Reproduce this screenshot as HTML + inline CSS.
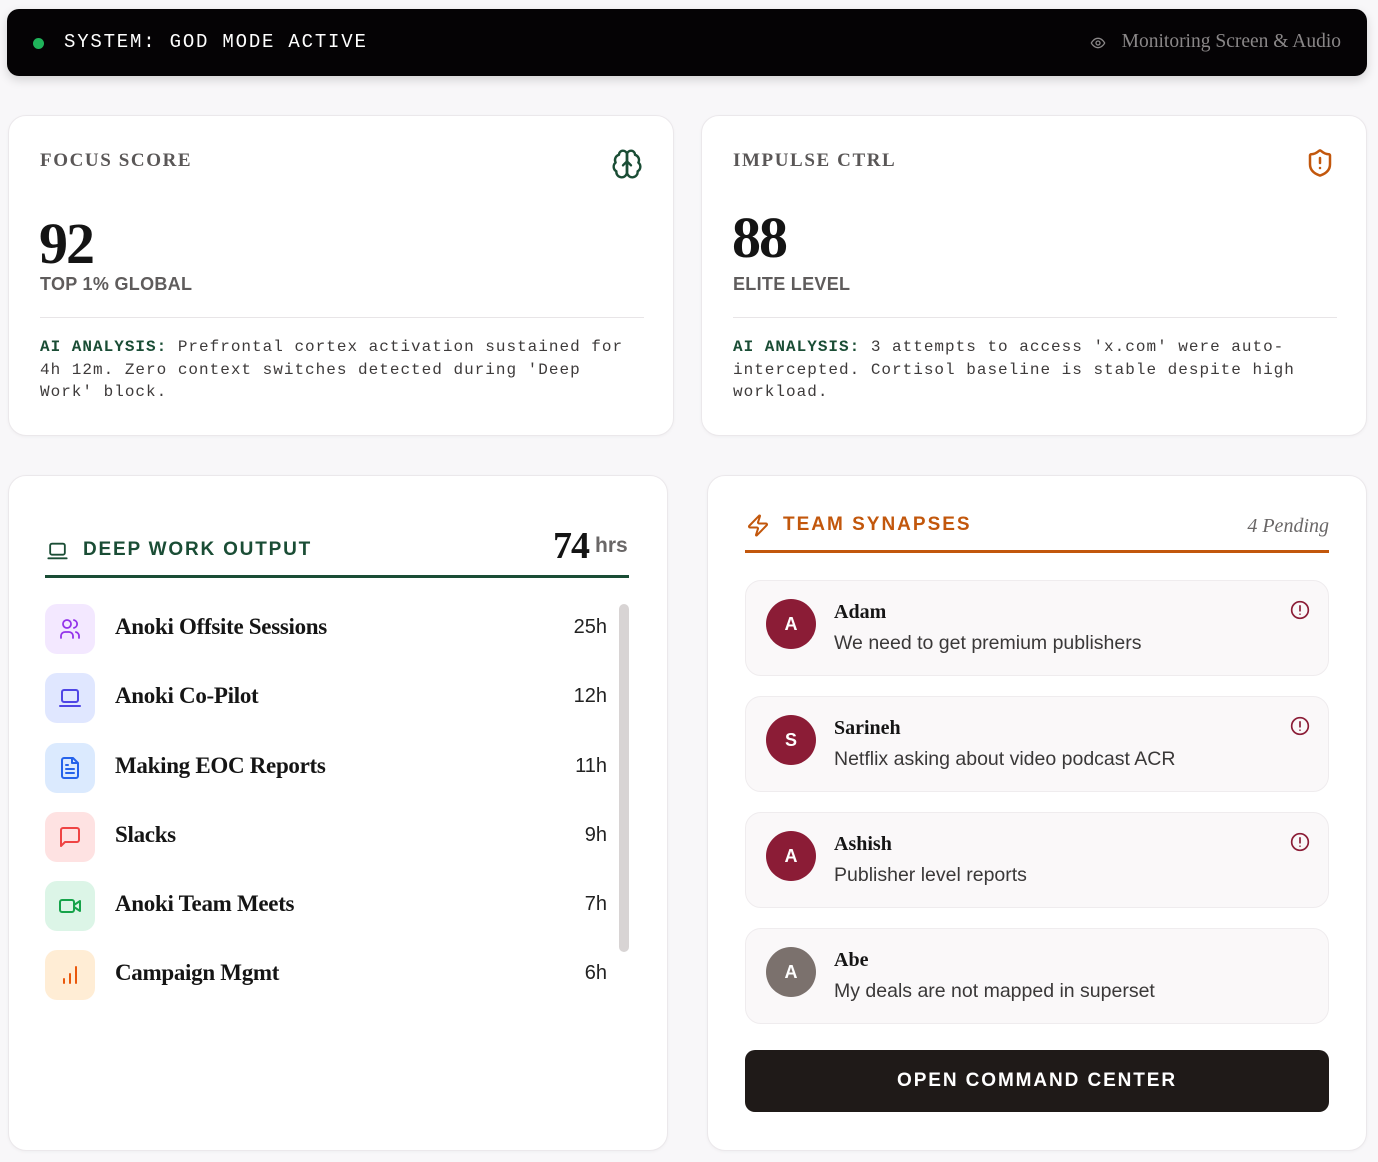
<!DOCTYPE html>
<html><head><meta charset="utf-8"><style>
*{box-sizing:border-box;margin:0;padding:0}
body{width:1378px;height:1162px;background:#f8f7f9;font-family:"Liberation Sans",sans-serif;position:relative;overflow:hidden;color:#1a1a1a}
.abs{position:absolute}
.hdr{left:7px;top:9px;width:1360px;height:67px;background:#050305;border-radius:12px;box-shadow:0 4px 10px rgba(0,0,0,.15)}
.card{background:#fff;border:1px solid #ebe8eb;border-radius:18px;box-shadow:0 1px 3px rgba(0,0,0,.04)}
.lbl{font-family:"Liberation Serif",serif;font-weight:bold;font-size:19px;letter-spacing:1.6px;color:#5a5757}
.big{font-family:"Liberation Serif",serif;font-weight:bold;font-size:58px;color:#141414;letter-spacing:-2px}
.sub{font-size:18px;font-weight:bold;color:#5f5c5c;letter-spacing:.3px}
.div{height:1px;background:#e8e5e7}
.mono{font-family:"Liberation Mono",monospace;font-size:16px;letter-spacing:1px;line-height:22.5px;color:#3e3b3b;width:599px}
.mono b{color:#1a4d35}
.row{left:45px;width:562px;height:50px}
.ib{position:absolute;left:0;top:0;width:50px;height:50px;border-radius:12px;display:flex;align-items:center;justify-content:center}
.nm{position:absolute;left:70px;top:10px;font-family:"Liberation Serif",serif;font-weight:bold;font-size:23px;color:#151515;letter-spacing:-.3px}
.vl{position:absolute;right:0;top:12px;font-size:20px;color:#222}
.msg{left:745px;width:584px;height:96px;background:#faf8f9;border:1px solid #efecee;border-radius:16px}
.av{position:absolute;left:20px;top:18px;width:50px;height:50px;border-radius:50%;background:#8b1c36;color:#fff;font-weight:bold;font-size:18px;display:flex;align-items:center;justify-content:center}
.mn{position:absolute;left:88px;top:20px;font-family:"Liberation Serif",serif;font-weight:bold;font-size:20px;color:#151515}
.mt{position:absolute;left:88px;top:51px;font-size:19.5px;color:#3a3838}
.al{position:absolute;left:544px;top:19px}
</style></head><body>
<div class="abs hdr">
 <div class="abs" style="left:26px;top:29px;width:11px;height:11px;border-radius:50%;background:#1fb35a"></div>
 <div class="abs" style="left:57px;top:22px;font-family:'Liberation Mono',monospace;font-size:19px;color:#fff;letter-spacing:1.8px">SYSTEM: GOD MODE ACTIVE</div>
 <svg class="abs" style="left:1082px;top:26px" width="18" height="16" viewBox="0 0 24 24" fill="none" stroke="#8a8788" stroke-width="2"><path d="M2 12s3.5-7 10-7 10 7 10 7-3.5 7-10 7S2 12 2 12z"/><circle cx="12" cy="12" r="3"/></svg>
 <div class="abs" style="right:26px;top:22px;font-family:'Liberation Serif',serif;font-size:19.5px;color:#8a8788">Monitoring Screen &amp; Audio</div>
</div>

<div class="abs card" style="left:8px;top:115px;width:666px;height:321px">
 <div class="abs lbl" style="left:31px;top:34px">FOCUS SCORE</div>
 <svg class="abs" style="left:602px;top:32px" width="32" height="32" viewBox="0 0 24 24" fill="none" stroke="#1a4d35" stroke-width="1.8" stroke-linecap="round" stroke-linejoin="round"><path d="M12 5a3 3 0 1 0-5.997.125 4 4 0 0 0-2.526 5.77 4 4 0 0 0 .556 6.588A4 4 0 1 0 12 18Z"/><path d="M12 5a3 3 0 1 1 5.997.125 4 4 0 0 1 2.526 5.77 4 4 0 0 1-.556 6.588A4 4 0 1 1 12 18Z"/><path d="M12 5v13M9 13l3-3 3 3"/></svg>
 <div class="abs big" style="left:30px;top:94px">92</div>
 <div class="abs sub" style="left:31px;top:158px">TOP 1% GLOBAL</div>
 <div class="abs div" style="left:31px;top:201px;width:604px"></div>
 <div class="abs mono" style="left:31px;top:220px"><b>AI ANALYSIS:</b> Prefrontal cortex activation sustained for 4h 12m. Zero context switches detected during 'Deep Work' block.</div>
</div>

<div class="abs card" style="left:701px;top:115px;width:666px;height:321px">
 <div class="abs lbl" style="left:31px;top:34px">IMPULSE CTRL</div>
 <svg class="abs" style="left:603px;top:32px" width="30" height="30" viewBox="0 0 24 24" fill="none" stroke="#c2570c" stroke-width="2" stroke-linecap="round" stroke-linejoin="round"><path d="M20 13c0 5-3.5 7.5-7.66 8.95a1 1 0 0 1-.67-.01C7.5 20.5 4 18 4 13V6a1 1 0 0 1 1-1c2 0 4.5-1.2 6.24-2.72a1.17 1.17 0 0 1 1.52 0C14.51 3.81 17 5 19 5a1 1 0 0 1 1 1z"/><path d="M12 8v4M12 16h.01"/></svg>
 <div class="abs big" style="left:30px;top:88px">88</div>
 <div class="abs sub" style="left:31px;top:158px">ELITE LEVEL</div>
 <div class="abs div" style="left:31px;top:201px;width:604px"></div>
 <div class="abs mono" style="left:31px;top:220px"><b>AI ANALYSIS:</b> 3 attempts to access 'x.com' were auto-intercepted. Cortisol baseline is stable despite high workload.</div>
</div>

<div class="abs card" style="left:8px;top:475px;width:660px;height:676px"></div>
<svg class="abs" style="left:46px;top:540px" width="23" height="22" viewBox="0 0 24 24" fill="none" stroke="#1a4d35" stroke-width="2" stroke-linecap="round" stroke-linejoin="round"><rect x="4" y="4" width="16" height="12" rx="2"/><path d="M2 20h20"/></svg>
<div class="abs" style="left:83px;top:539px;font-size:19px;font-weight:bold;letter-spacing:1.8px;color:#1a4d35">DEEP WORK OUTPUT</div>
<div class="abs" style="left:553px;top:524px;font-family:'Liberation Serif',serif;font-weight:bold;font-size:38px;color:#141414;letter-spacing:-1px">74</div>
<div class="abs" style="left:595px;top:534px;font-size:21px;font-weight:bold;color:#6a6767">hrs</div>
<div class="abs" style="left:45px;top:575px;width:584px;height:3px;background:#1a4d35"></div>
<div class="abs" style="left:619px;top:604px;width:10px;height:348px;background:#d8d4d4;border-radius:5px"></div>

<div class="abs row" style="top:604px"><div class="ib" style="background:#f3e8ff"><svg width="24" height="24" viewBox="0 0 24 24" fill="none" stroke="#9333ea" stroke-width="1.8" stroke-linecap="round"><circle cx="9" cy="7" r="4"/><path d="M3 21v-2a4 4 0 0 1 4-4h4a4 4 0 0 1 4 4v2M16 3.1a4 4 0 0 1 0 7.8M21 21v-2a4 4 0 0 0-3-3.9"/></svg></div><div class="nm">Anoki Offsite Sessions</div><div class="vl">25h</div></div>
<div class="abs row" style="top:673px"><div class="ib" style="background:#e0e7ff"><svg width="24" height="24" viewBox="0 0 24 24" fill="none" stroke="#4f46e5" stroke-width="2" stroke-linecap="round"><rect x="4" y="4" width="16" height="12" rx="2"/><path d="M2 20h20"/></svg></div><div class="nm">Anoki Co-Pilot</div><div class="vl">12h</div></div>
<div class="abs row" style="top:743px"><div class="ib" style="background:#dbeafe"><svg width="24" height="24" viewBox="0 0 24 24" fill="none" stroke="#2563eb" stroke-width="2" stroke-linecap="round" stroke-linejoin="round"><path d="M15 2H6a2 2 0 0 0-2 2v16a2 2 0 0 0 2 2h12a2 2 0 0 0 2-2V7z"/><path d="M14 2v5h5M10 9H8M16 13H8M16 17H8"/></svg></div><div class="nm">Making EOC Reports</div><div class="vl">11h</div></div>
<div class="abs row" style="top:812px"><div class="ib" style="background:#fee2e2"><svg width="24" height="24" viewBox="0 0 24 24" fill="none" stroke="#ef4444" stroke-width="2" stroke-linejoin="round"><path d="M21 15a2 2 0 0 1-2 2H7l-4 4V5a2 2 0 0 1 2-2h14a2 2 0 0 1 2 2z"/></svg></div><div class="nm">Slacks</div><div class="vl">9h</div></div>
<div class="abs row" style="top:881px"><div class="ib" style="background:#dcf5e7"><svg width="24" height="24" viewBox="0 0 24 24" fill="none" stroke="#16a34a" stroke-width="2" stroke-linejoin="round"><rect x="2" y="6" width="14" height="12" rx="2"/><path d="M16 13l6 4V7l-6 4"/></svg></div><div class="nm">Anoki Team Meets</div><div class="vl">7h</div></div>
<div class="abs row" style="top:950px"><div class="ib" style="background:#ffedd5"><svg width="24" height="24" viewBox="0 0 24 24" fill="none" stroke="#ea580c" stroke-width="2" stroke-linecap="round"><path d="M6 20v-4M12 20v-9M18 20V4"/></svg></div><div class="nm">Campaign Mgmt</div><div class="vl">6h</div></div>

<div class="abs card" style="left:707px;top:475px;width:660px;height:676px"></div>
<svg class="abs" style="left:746px;top:513px" width="24" height="25" viewBox="0 0 24 24" fill="none" stroke="#c2570c" stroke-width="2" stroke-linejoin="round"><path d="M4 14a1 1 0 0 1-.78-1.63l9.9-10.2a.5.5 0 0 1 .86.46l-1.92 6.02A1 1 0 0 0 13 10h7a1 1 0 0 1 .78 1.63l-9.9 10.2a.5.5 0 0 1-.86-.46l1.92-6.02A1 1 0 0 0 11 14z"/></svg>
<div class="abs" style="left:783px;top:514px;font-size:19px;font-weight:bold;letter-spacing:2px;color:#c2570c">TEAM SYNAPSES</div>
<div class="abs" style="right:49px;top:515px;font-family:'Liberation Serif',serif;font-style:italic;font-size:20px;color:#6a6767">4 Pending</div>
<div class="abs" style="left:745px;top:550px;width:584px;height:3px;background:#c2570c"></div>

<div class="abs msg" style="top:580px"><div class="av">A</div><div class="mn">Adam</div><div class="mt">We need to get premium publishers</div><svg class="al" width="20" height="20" viewBox="0 0 24 24" fill="none" stroke="#8b1c36" stroke-width="2" stroke-linecap="round"><circle cx="12" cy="12" r="10"/><path d="M12 7v6M12 17h.01"/></svg></div>
<div class="abs msg" style="top:696px"><div class="av">S</div><div class="mn">Sarineh</div><div class="mt">Netflix asking about video podcast ACR</div><svg class="al" width="20" height="20" viewBox="0 0 24 24" fill="none" stroke="#8b1c36" stroke-width="2" stroke-linecap="round"><circle cx="12" cy="12" r="10"/><path d="M12 7v6M12 17h.01"/></svg></div>
<div class="abs msg" style="top:812px"><div class="av">A</div><div class="mn">Ashish</div><div class="mt">Publisher level reports</div><svg class="al" width="20" height="20" viewBox="0 0 24 24" fill="none" stroke="#8b1c36" stroke-width="2" stroke-linecap="round"><circle cx="12" cy="12" r="10"/><path d="M12 7v6M12 17h.01"/></svg></div>
<div class="abs msg" style="top:928px"><div class="av" style="background:#7b716d">A</div><div class="mn">Abe</div><div class="mt">My deals are not mapped in superset</div></div>

<div class="abs" style="left:745px;top:1050px;width:584px;height:62px;background:#1f1a18;border-radius:10px;color:#fff;font-weight:bold;font-size:19px;letter-spacing:1.9px;display:flex;align-items:center;justify-content:center">OPEN COMMAND CENTER</div>
</body></html>
